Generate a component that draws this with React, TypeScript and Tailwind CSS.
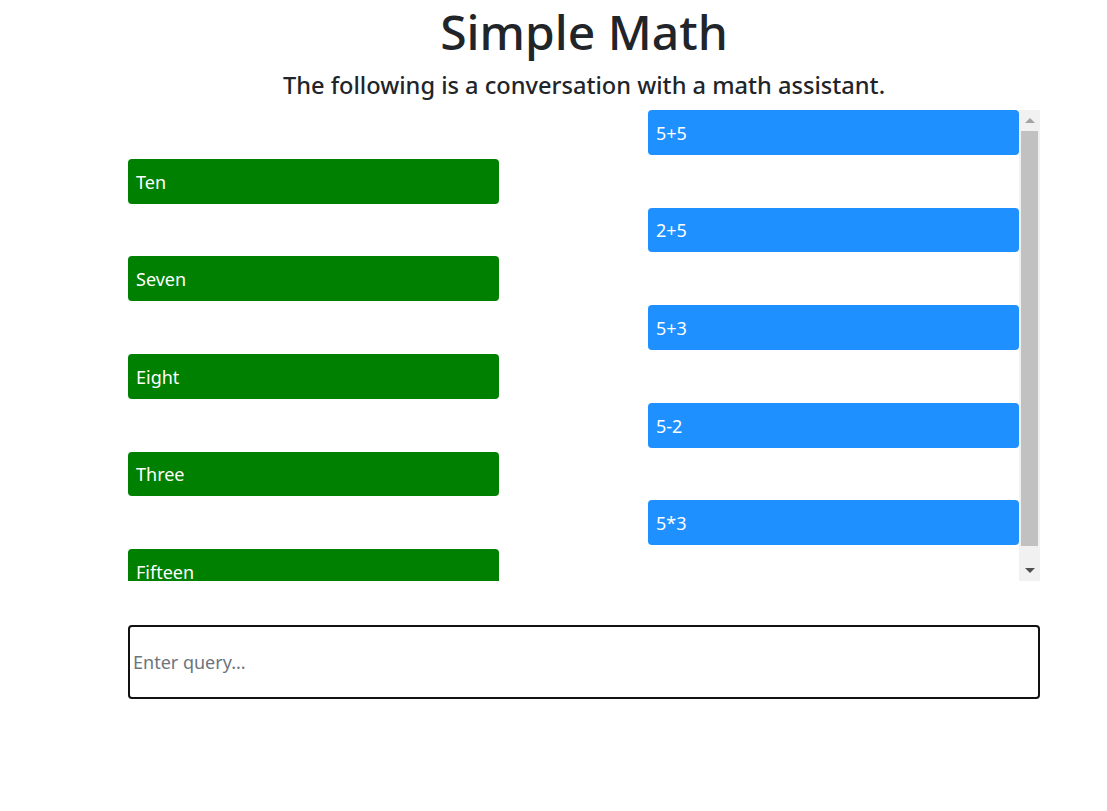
import React, { useState } from "react";

type Message = {
  text: string;
  fromUser: boolean;
};

const initialMessages: Message[] = [
  { text: "5+5", fromUser: true },
  { text: "Ten", fromUser: false },
  { text: "2+5", fromUser: true },
  { text: "Seven", fromUser: false },
  { text: "5+3", fromUser: true },
  { text: "Eight", fromUser: false },
  { text: "5-2", fromUser: true },
  { text: "Three", fromUser: false },
  { text: "5*3", fromUser: true },
  { text: "Fifteen", fromUser: false },
];

// classic scrollbar look (the page runs with hidden native scrollbars)
const ScrollBar = () => (
  <div className="flex w-[21px] shrink-0 flex-col bg-[#f1f1f1]">
    <div className="flex h-[21px] items-center justify-center">
      <div className="h-0 w-0 border-x-[5px] border-b-[5px] border-x-transparent border-b-[#a3a3a3]" />
    </div>
    <div className="mx-[2px] h-[415px] bg-[#c1c1c1]" />
    <div className="flex-1" />
    <div className="flex h-[21px] items-center justify-center">
      <div className="h-0 w-0 border-x-[5px] border-t-[5px] border-x-transparent border-t-[#505050]" />
    </div>
  </div>
);

const App = () => {
  const [messages] = useState<Message[]>(initialMessages);
  const [query, setQuery] = useState<string>("");

  return (
    <div className="min-h-screen bg-white font-['Noto_Sans','Open_Sans',sans-serif] text-[#212529]">
      <div className="ml-[128px] w-[912px]">
        <h1 className="mt-[3px] text-center text-[48px] font-medium leading-[1.2]">
          Simple Math
        </h1>
        <h4 className="mt-[7px] mb-[7px] text-center text-[23.6px] font-medium leading-[1.5]">
          The following is a conversation with a math assistant.
        </h4>

        {/* chat history */}
        <div className="flex h-[471px]">
          <div className="flex-1 overflow-y-auto [scrollbar-width:none]">
            {messages.map((message, index) => (
              <div
                key={index}
                className={
                  message.fromUser
                    ? "mb-1 flex justify-end"
                    : "mb-1 flex justify-start"
                }
              >
                <div
                  className={
                    message.fromUser
                      ? "flex h-[44.8px] w-[371px] items-center rounded bg-[#1e90ff] px-2 pt-[2px] text-[18px] text-white"
                      : "flex h-[44.8px] w-[371px] items-center rounded bg-[#008000] px-2 pt-[2px] text-[18px] text-white"
                  }
                >
                  {message.text}
                </div>
              </div>
            ))}
          </div>
          <ScrollBar />
        </div>

        <input
          type="text"
          autoFocus
          className="mt-[44px] block h-[74px] w-full rounded border-2 border-[#111] px-[3px] text-[18px] text-[#212529] placeholder:text-[#6c757d] focus:outline-none"
          placeholder="Enter query..."
          value={query}
          onChange={(e) => setQuery(e.target.value)}
        />
      </div>
    </div>
  );
};

export default App;
